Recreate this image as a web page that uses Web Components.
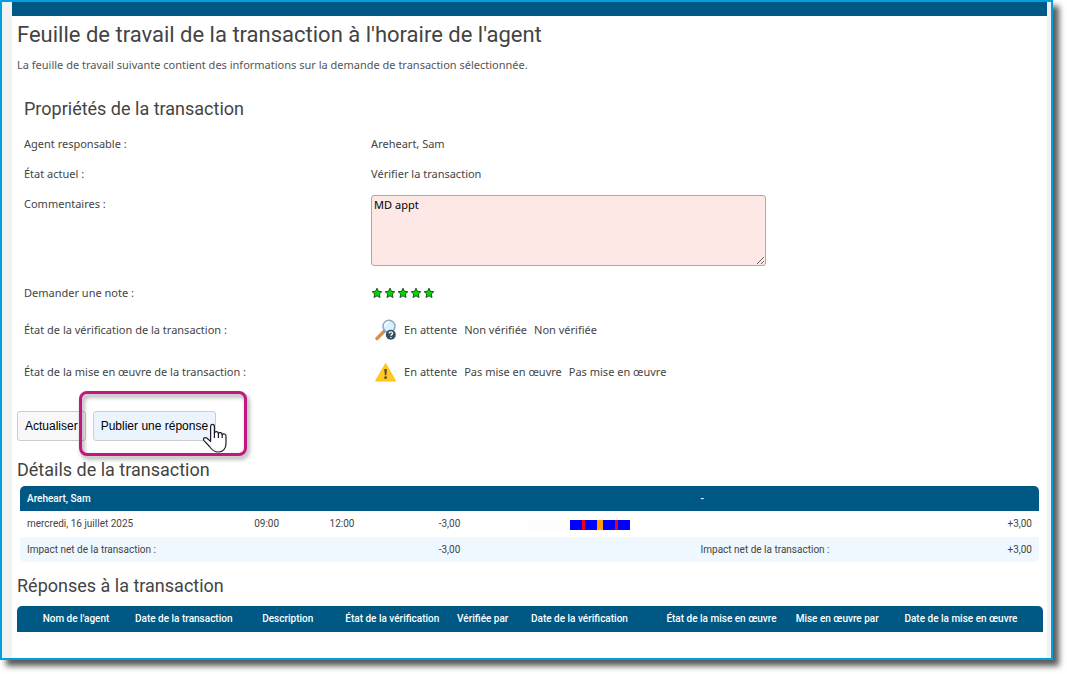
<!DOCTYPE html>
<html lang="fr">
<head>
<meta charset="utf-8">
<meta name="viewport" content="width=device-width, initial-scale=1">
<title>Feuille de travail de la transaction</title>
<style>
  body { margin: 0; background: #fff; color: #444; font: 11px/18px "Noto Sans", "Open Sans", sans-serif; }
</style>
</head>
<body>
<worksheet-page></worksheet-page>
<script>
const define = (name, html, setup) => customElements.define(name, class extends HTMLElement {
  constructor() {
    super();
    this.attachShadow({ mode: 'open' }).innerHTML = html;
  }
  connectedCallback() { if (setup) setup(this, this.shadowRoot); }
});

define('app-frame', `
  <style>
    :host { display: block; padding: 0 14px 14px 0; }
    .frame { border: 2px solid #00a0df; background: #f2f2f2; padding: 0 4px 0 10px; box-shadow: 6px 6px 6px rgba(0,0,0,.65); }
    .bar { height: 14px; background: #005984; }
    main { background: #fff; padding: 4px 4px 26px 5px; }
  </style>
  <div class="frame"><header class="bar"></header><main><slot></slot></main></div>`);

define('property-row', `
  <style>
    :host { display: grid; grid-template-columns: 34fr 66fr; column-gap: 1px; align-items: center; min-height: 30px; }
    :host([kind="rating"]) { min-height: 33px; padding-top: 4px; }
    :host([kind="status"]) { min-height: 42px; }
    .value { display: flex; align-items: center; gap: 7px; }
  </style>
  <div><slot name="label"></slot></div>
  <div class="value"><slot></slot></div>`);

define('comment-row', `
  <style>
    :host { display: grid; grid-template-columns: 34fr 66fr; column-gap: 1px; align-items: start; padding: 6px 0; }
    textarea { display: block; box-sizing: border-box; width: 395px; max-width: 100%; height: 71px; margin: 0; padding: 0 2px;
      border: 1px solid #aaa; border-radius: 3px; background: #fde8e6; color: #000; font: 11px/18px "Noto Sans", "Open Sans", sans-serif; }
  </style>
  <label for="comments">Commentaires :</label>
  <textarea id="comments">MD appt</textarea>`);

define('star-rating', `
  <style>
    :host { display: flex; gap: 1px; }
    svg { display: block; width: 12px; height: 12px; }
  </style>
  <template><svg viewBox="0 0 12 12" aria-hidden="true"><path d="M6 1.2 7.4 4.3 10.8 4.7 8.3 7 9 10.5 6 8.8 3 10.5 3.7 7 1.2 4.7 4.6 4.3Z" fill="#00d800" stroke="#245024" stroke-width="1" stroke-linejoin="round"/></svg></template>`,
  (host, root) => {
    const t = root.querySelector('template');
    for (let i = 0; i < Number(host.getAttribute('value')); i++) root.append(t.content.cloneNode(true));
  });

define('search-icon', `
  <style>:host { display: block; padding-left: 4px; } svg { display: block; }</style>
  <svg width="22" height="22" viewBox="0 0 22 22" aria-hidden="true">
    <path d="M2 19.5 9 12.5" stroke="#d98f4e" stroke-width="3.4" stroke-linecap="round"/>
    <path d="M8.4 13.2 10 11.6" stroke="#7d99ad" stroke-width="2.4"/>
    <circle cx="14" cy="7.2" r="6" fill="#d9efff" stroke="#8fa9bf" stroke-width="1.5"/>
    <path d="M10 7a4.2 4.2 0 0 1 4-4" stroke="#fff" stroke-width="1.5" fill="none"/>
    <circle cx="15.8" cy="15.8" r="5" fill="#36505f"/>
    <path d="M14.1 14.5c.1-2.2 3.5-2.1 3.4-.1 0 1.2-1.6 1.2-1.6 2.3M15.9 18v1.1" fill="none" stroke="#fff" stroke-width="1.3"/>
  </svg>`);

define('warning-icon', `
  <style>:host { display: block; padding-left: 4px; } svg { display: block; }</style>
  <svg width="22" height="22" viewBox="0 0 22 22" aria-hidden="true">
    <path d="M10.6 2.6 20.6 20H.6Z" fill="#ffc91f" stroke="#f9c01c" stroke-width="1" stroke-linejoin="round"/>
    <path d="M9.3 8h2.6l-.5 6.2H9.8Z" fill="#5d4a28"/><circle cx="10.6" cy="16.7" r="1.4" fill="#5d4a28"/>
  </svg>`);

define('action-button', `
  <style>
    :host { display: block; }
    button { box-sizing: border-box; display: block; height: 30px; margin: 0; padding: 0 7px; border: 1px solid #ccc; border-radius: 3px;
      background: #f8f8f8; color: #000; font: 12px/18px "Liberation Sans", Arial, sans-serif; white-space: nowrap; }
    :host([hovered]) button { background: #ebf4fd; }
  </style>
  <button type="button"><slot></slot></button>`);

define('focus-callout', `
  <style>
    :host { display: block; position: relative; }
    .ring { position: absolute; inset: -20px -31px -15px -14px; border: 3px solid #c21780; border-radius: 8px; pointer-events: none;
      filter: drop-shadow(2px 3px 2px rgba(0,0,0,.4)); }
    svg { position: absolute; right: -12px; bottom: -12px; pointer-events: none; }
  </style>
  <slot></slot>
  <div class="ring"></div>
  <svg width="26" height="30" viewBox="0 0 26 30" aria-hidden="true">
    <path d="M8.6 17V3.6C8.6.5 12.4.5 12.4 3.6V10C13.3 8 16.2 8.4 16.4 10.5 17.4 8.9 20 9.4 20.2 11.6 21.5 10.2 24 11 24 13.2V20.5C24 25.5 21 29 16.5 29 12.5 29 10 27 7.5 23.5L2 17.6C.4 15.6 2.8 13.7 5 15.2L8.6 18.4Z" fill="#fff" stroke="#1b1b2c" stroke-width="1.2" stroke-linejoin="round"/>
    <path d="M12.4 9.5V15M16.4 10.5V15M20.2 11.6V15" fill="none" stroke="#1b1b2c" stroke-width="1.2"/>
  </svg>`);

define('schedule-strip', `
  <style>
    :host { display: flex; height: 10px; width: 104px; margin: 0 auto; padding-top: 1px; }
    i { display: block; height: 10px; background: #00f; }
    .none { background: #fdfdfd; width: 42px; } .work { width: 12px; } .pause { background: #f00018; width: 3px; } .meal { background: #ffa000; width: 6px; }
  </style>
  <i class="none"></i><i class="work"></i><i class="pause"></i><i class="work"></i><i class="meal"></i><i class="work"></i><i class="pause"></i><i class="work"></i>`);

define('transaction-details', `
  <style>
    :host { display: block; padding: 0 4px 0 3px; }
    table { width: 100%; table-layout: fixed; border-collapse: separate; border-spacing: 0; font: 10px/16px Roboto, sans-serif; }
    th, td { padding: 0 7px; height: 25px; text-align: left; white-space: nowrap; }
    th { background: #005984; color: #fff; font-weight: 500; }
    tbody td { height: 26px; }
    tfoot td { background: #eff7ff; }
    .time { text-align: center; } .num { text-align: right; }
    th:first-child { border-top-left-radius: 5px; } th:last-child { border-top-right-radius: 5px; }
    tfoot td:first-child { border-bottom-left-radius: 5px; } tfoot td:last-child { border-bottom-right-radius: 5px; }
  </style>
  <table>
    <colgroup><col style="width:20.5%"><col style="width:7.4%"><col style="width:7.4%"><col style="width:8.6%"><col style="width:22.2%"><col style="width:23.9%"><col style="width:10%"></colgroup>
    <thead><tr><th colspan="5">Areheart, Sam</th><th colspan="2">-</th></tr></thead>
    <tbody><tr><td>mercredi, 16 juillet 2025</td><td class="time">09:00</td><td class="time">12:00</td><td class="num">-3,00</td><td><schedule-strip></schedule-strip></td><td></td><td class="num">+3,00</td></tr></tbody>
    <tfoot><tr><td colspan="3">Impact net de la transaction :</td><td class="num">-3,00</td><td></td><td>Impact net de la transaction :</td><td class="num">+3,00</td></tr></tfoot>
  </table>`);

define('response-table', `
  <style>
    :host { display: block; }
    table { width: 100%; table-layout: fixed; border-collapse: separate; border-spacing: 0; font: 10px/16px Roboto, sans-serif; }
    th, td { padding: 0; height: 26px; background: #005984; color: #fff; text-align: left; font-weight: 500; white-space: nowrap; }
    td { border-top-left-radius: 5px; } th:last-child { border-top-right-radius: 5px; }
  </style>
  <table>
    <colgroup><col style="width:2.5%"><col style="width:9%"><col style="width:12.4%"><col style="width:8.1%"><col style="width:10.9%"><col style="width:7.2%"><col style="width:13.2%"><col style="width:12.6%"><col style="width:10.6%"><col></colgroup>
    <thead><tr><td></td><th>Nom de l'agent</th><th>Date de la transaction</th><th>Description</th><th>État de la vérification</th><th>Vérifiée par</th><th>Date de la vérification</th><th>État de la mise en œuvre</th><th>Mise en œuvre par</th><th>Date de la mise en œuvre</th></tr></thead>
  </table>`);

define('worksheet-page', `
  <style>
    :host { display: block; }
    h1, h2 { margin: 0; font-family: Roboto, sans-serif; font-weight: 400; color: #444; }
    h1 { font-size: 22px; line-height: 30px; }
    h2 { font-size: 18px; line-height: 24px; }
    p { margin: 6px 0 23px; color: #555; }
    .properties { padding-left: 7px; }
    .properties h2 { margin-bottom: 8px; }
    .actions { display: flex; gap: 7px; margin: 18px 0 17px; }
    transaction-details { margin: 4px 0 12px; }
    response-table { margin-top: 8px; }
  </style>
  <app-frame>
    <h1>Feuille de travail de la transaction à l'horaire de l'agent</h1>
    <p>La feuille de travail suivante contient des informations sur la demande de transaction sélectionnée.</p>
    <section class="properties">
      <h2>Propriétés de la transaction</h2>
      <property-row><span slot="label">Agent responsable :</span><span>Areheart, Sam</span></property-row>
      <property-row><span slot="label">État actuel :</span><span>Vérifier la transaction</span></property-row>
      <comment-row></comment-row>
      <property-row kind="rating"><span slot="label">Demander une note :</span><star-rating value="5"></star-rating></property-row>
      <property-row kind="status"><span slot="label">État de la vérification de la transaction :</span><search-icon></search-icon><span>En attente</span><span>Non vérifiée</span><span>Non vérifiée</span></property-row>
      <property-row kind="status"><span slot="label">État de la mise en œuvre de la transaction :</span><warning-icon></warning-icon><span>En attente</span><span>Pas mise en œuvre</span><span>Pas mise en œuvre</span></property-row>
    </section>
    <div class="actions">
      <action-button>Actualiser</action-button>
      <focus-callout><action-button hovered>Publier une réponse</action-button></focus-callout>
    </div>
    <h2>Détails de la transaction</h2>
    <transaction-details></transaction-details>
    <h2>Réponses à la transaction</h2>
    <response-table></response-table>
  </app-frame>`);
</script>
</body>
</html>
